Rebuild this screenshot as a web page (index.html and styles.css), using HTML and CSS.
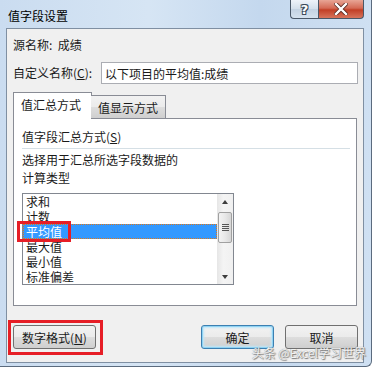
FILE: index.html
```html
<!DOCTYPE html>
<html lang="zh-CN">
<head>
  <meta charset="UTF-8" />
  <title>值字段设置</title>
  <link rel="stylesheet" href="styles.css">
</head>
<body>

<div class="window">
  <div class="titlebar">
    <span class="title">值字段设置</span>
    <div class="caption-btns">
      <span class="cap-btn help">?</span>
      <span class="cap-btn close">
        <svg width="14" height="12" viewBox="0 0 14 12">
          <path d="M2 1 L12 11 M12 1 L2 11" stroke="#5a2a22" stroke-width="4" stroke-linecap="square"/>
          <path d="M2 1 L12 11 M12 1 L2 11" stroke="#fff" stroke-width="2.4" stroke-linecap="square"/>
        </svg>
      </span>
    </div>
  </div>

  <div class="client">
    <div class="row source">源名称:&nbsp;&nbsp;成绩</div>

    <div class="row name-row">
      <label for="customName">自定义名称(<u>C</u>):</label>
      <input type="text" id="customName" value="以下项目的平均值:成绩" />
    </div>

    <div class="tabs">
      <div class="tab active">值汇总方式</div>
      <div class="tab">值显示方式</div>
    </div>

    <div class="tab-panel">
      <div class="group-title">值字段汇总方式(<u>S</u>)</div>
      <div class="separator"></div>
      <div class="hint">选择用于汇总所选字段数据的<br>计算类型</div>

      <div class="listbox">
        <ul class="items">
          <li>求和</li>
          <li>计数</li>
          <li class="selected">平均值</li>
          <li>最大值</li>
          <li>最小值</li>
          <li>标准偏差</li>
        </ul>
        <div class="scrollbar">
          <span class="arrow up"></span>
          <span class="thumb"><i></i><i></i><i></i><i></i></span>
          <span class="arrow down"></span>
        </div>
        <span class="mark mark-item"></span>
      </div>
    </div>

    <div class="buttons">
      <div class="left-btn">
        <button class="btn number-btn">数字格式(<u>N</u>)</button>
        <span class="mark mark-btn"></span>
      </div>
      <button class="btn default">确定</button>
      <button class="btn">取消</button>
    </div>
  </div>

  <span class="watermark">头条 @Excel学习世界</span>
</div>

</body>
</html>
```

FILE: styles.css
```css
body {
  margin: 0;
  background: #fff;
  font-family: "Microsoft YaHei", "Noto Sans CJK SC", "DejaVu Sans", sans-serif;
  font-size: 12px;
  color: #1a1a1a;
}
.window {
  position: relative;
  width: 372px;
  height: 367px;
  box-sizing: border-box;
  display: flex;
  flex-direction: column;
  background: linear-gradient(90deg, #cadcf0 0%, #d6e5f4 40%, #c4d8ee 70%, #cfe0f2 100%);
  border-right: 1px solid #5b6b7e;
  border-bottom: 1px solid #5b6b7e;
  border-bottom-right-radius: 6px;
}
.titlebar {
  height: 28px;
  display: flex;
  justify-content: space-between;
  align-items: flex-start;
  padding-left: 8px;
  flex-shrink: 0;
}
.title {
  line-height: 32px;
  font-size: 12px;
  color: #000;
}
.caption-btns {
  display: flex;
  margin-right: 7px;
}
.cap-btn {
  height: 19px;
  box-sizing: border-box;
  border: 1px solid #4a5868;
  border-top: none;
  display: flex;
  align-items: center;
  justify-content: center;
}
.help {
  width: 28px;
  border-right: none;
  border-bottom-left-radius: 4px;
  background: linear-gradient(#eef3f9, #d3dfeb 50%, #c3d2e2 51%, #d5e2ef);
  color: #fff;
  font-family: "DejaVu Sans", sans-serif;
  font-weight: bold;
  font-size: 13px;
  text-shadow: 0 0 1px #3c4a5a, 1px 1px 0 #3c4a5a, -1px -1px 0 #3c4a5a, 1px -1px 0 #3c4a5a, -1px 1px 0 #3c4a5a;
}
.close {
  width: 46px;
  border-bottom-right-radius: 4px;
  background: linear-gradient(#e8a595, #d46a55 45%, #c23f26 55%, #d7745c);
}
.client {
  flex: 1;
  margin: 0 7px 3px 6px;
  border: 1px solid #7f8fa2;
  background: #f0f0f0;
  padding: 8px 5px 0 6px;
  display: flex;
  flex-direction: column;
}
.row {
  line-height: 16px;
}
.name-row {
  display: flex;
  align-items: center;
  justify-content: space-between;
  margin-top: 9px;
}
.name-row input {
  width: 257px;
  height: 22px;
  box-sizing: border-box;
  border: 1px solid #abadb3;
  background: #fff;
  font-family: inherit;
  font-size: 12px;
  color: #1a1a1a;
  padding: 0 0 0 3px;
}
.tabs {
  display: flex;
  align-items: flex-end;
  margin-top: 8px;
  position: relative;
  z-index: 1;
}
.tab {
  box-sizing: border-box;
  border: 1px solid #898c95;
  border-bottom: none;
  padding-left: 7px;
}
.tab.active {
  width: 79px;
  height: 27px;
  line-height: 24px;
  background: #fff;
  margin-bottom: -1px;
}
.tab:not(.active) {
  width: 75px;
  height: 23px;
  line-height: 23px;
  margin-left: -1px;
  border-left: none;
  background: linear-gradient(#f2f2f2, #ebebeb 50%, #dddddd 51%, #cfcfcf);
}
.tab-panel {
  width: 344px;
  height: 188px;
  box-sizing: border-box;
  border: 1px solid #898c95;
  background: #fff;
  padding: 10px 6px 0 8px;
}
.group-title {
  line-height: 16px;
}
.separator {
  height: 1px;
  background: #d5dfe5;
  margin-top: 3px;
}
.hint {
  line-height: 18px;
  margin-top: 2px;
}
.listbox {
  position: relative;
  width: 212px;
  height: 92px;
  box-sizing: border-box;
  border: 1px solid #828790;
  margin-top: 6px;
  display: flex;
}
.items {
  list-style: none;
  margin: 0;
  padding: 0;
  flex: 1;
}
.items li {
  height: 15px;
  line-height: 15px;
  padding-left: 3px;
}
.items li.selected {
  background: #3399ff;
  color: #fff;
  outline: 1px dotted #e07818;
  outline-offset: -1px;
}
.scrollbar {
  width: 16px;
  background: linear-gradient(90deg, #e6e6e6, #f4f4f4 40%, #f0f0f0);
  display: flex;
  flex-direction: column;
  align-items: center;
}
.arrow {
  width: 0;
  height: 0;
  border-left: 3px solid transparent;
  border-right: 3px solid transparent;
}
.arrow.up {
  margin-top: 6px;
  border-bottom: 4px solid #3e3e3e;
}
.arrow.down {
  margin-top: auto;
  margin-bottom: 5px;
  border-top: 4px solid #3e3e3e;
}
.thumb {
  width: 14px;
  height: 31px;
  box-sizing: border-box;
  margin-top: 8px;
  border: 1px solid #a0a0a0;
  border-radius: 2px;
  background: linear-gradient(90deg, #f3f3f3, #e8e8e8 50%, #d6d6d6);
  display: flex;
  flex-direction: column;
  align-items: center;
  justify-content: center;
  gap: 1px;
}
.thumb i {
  width: 7px;
  height: 1px;
  background: #555;
}
.buttons {
  display: flex;
  align-items: center;
  margin-top: 19px;
}
.left-btn {
  position: relative;
  margin-right: auto;
}
.btn {
  height: 24px;
  box-sizing: border-box;
  border: 1px solid #707070;
  border-radius: 3px;
  background: linear-gradient(#f2f2f2, #ebebeb 50%, #dddddd 51%, #cfcfcf);
  font-family: inherit;
  font-size: 12px;
  color: #1a1a1a;
  padding: 0;
  width: 72px;
  margin-right: 11px;
}
.btn:last-child {
  margin-right: 0;
  width: 73px;
}
.number-btn {
  width: 83px;
}
.btn.default {
  width: 73px;
  border-color: #3c7fb1;
  box-shadow: inset 0 0 0 1px #8fd3f3, inset 0 0 2px 2px #bfe6f8;
}
.mark {
  position: absolute;
  border: 3px solid #e61e26;
  pointer-events: none;
}
.mark-item {
  left: -6px;
  top: 27px;
  width: 48px;
  height: 15px;
}
.mark-btn {
  left: -5px;
  top: -5px;
  width: 89px;
  height: 29px;
}
.watermark {
  position: absolute;
  right: 5px;
  bottom: 7px;
  line-height: 13px;
  color: #f4f4f4;
  font-size: 12px;
  text-shadow: 0 0 1px #6a6a6a, 1px 1px 1px #7a7a7a;
}
```
